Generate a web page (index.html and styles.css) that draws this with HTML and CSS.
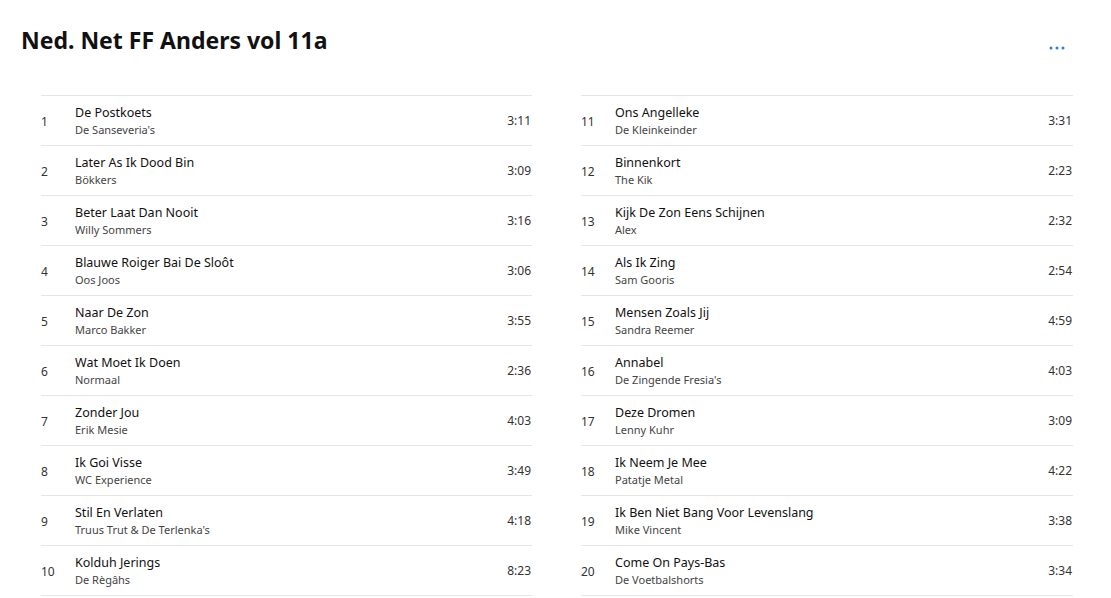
FILE: index.html
```html
<!DOCTYPE html>
<html>
<head>
<meta charset="utf-8">
<link rel="stylesheet" href="styles.css">
</head>
<body>
<div class="page">
  <header class="head">
    <h1 class="title">Ned. Net FF Anders vol 11a</h1>
    <button class="more" aria-label="More"><svg width="16" height="4" viewBox="0 0 16 4"><circle cx="2" cy="2" r="1.5"/><circle cx="8" cy="2" r="1.5"/><circle cx="14" cy="2" r="1.5"/></svg></button>
  </header>
  <div class="cols">
    <ol class="list">
      <li class="row"><span class="num">1</span><div class="info"><span class="song">De Postkoets</span><span class="artist">De Sanseveria's</span></div><span class="dur">3:11</span></li>
      <li class="row"><span class="num">2</span><div class="info"><span class="song">Later As Ik Dood Bin</span><span class="artist">Bökkers</span></div><span class="dur">3:09</span></li>
      <li class="row"><span class="num">3</span><div class="info"><span class="song">Beter Laat Dan Nooit</span><span class="artist">Willy Sommers</span></div><span class="dur">3:16</span></li>
      <li class="row"><span class="num">4</span><div class="info"><span class="song">Blauwe Roiger Bai De Sloôt</span><span class="artist">Oos Joos</span></div><span class="dur">3:06</span></li>
      <li class="row"><span class="num">5</span><div class="info"><span class="song">Naar De Zon</span><span class="artist">Marco Bakker</span></div><span class="dur">3:55</span></li>
      <li class="row"><span class="num">6</span><div class="info"><span class="song">Wat Moet Ik Doen</span><span class="artist">Normaal</span></div><span class="dur">2:36</span></li>
      <li class="row"><span class="num">7</span><div class="info"><span class="song">Zonder Jou</span><span class="artist">Erik Mesie</span></div><span class="dur">4:03</span></li>
      <li class="row"><span class="num">8</span><div class="info"><span class="song">Ik Goi Visse</span><span class="artist">WC Experience</span></div><span class="dur">3:49</span></li>
      <li class="row"><span class="num">9</span><div class="info"><span class="song">Stil En Verlaten</span><span class="artist">Truus Trut &amp; De Terlenka's</span></div><span class="dur">4:18</span></li>
      <li class="row"><span class="num">10</span><div class="info"><span class="song">Kolduh Jerings</span><span class="artist">De Règâhs</span></div><span class="dur">8:23</span></li>
    </ol>
    <ol class="list">
      <li class="row"><span class="num">11</span><div class="info"><span class="song">Ons Angelleke</span><span class="artist">De Kleinkeinder</span></div><span class="dur">3:31</span></li>
      <li class="row"><span class="num">12</span><div class="info"><span class="song">Binnenkort</span><span class="artist">The Kik</span></div><span class="dur">2:23</span></li>
      <li class="row"><span class="num">13</span><div class="info"><span class="song">Kijk De Zon Eens Schijnen</span><span class="artist">Alex</span></div><span class="dur">2:32</span></li>
      <li class="row"><span class="num">14</span><div class="info"><span class="song">Als Ik Zing</span><span class="artist">Sam Gooris</span></div><span class="dur">2:54</span></li>
      <li class="row"><span class="num">15</span><div class="info"><span class="song">Mensen Zoals Jij</span><span class="artist">Sandra Reemer</span></div><span class="dur">4:59</span></li>
      <li class="row"><span class="num">16</span><div class="info"><span class="song">Annabel</span><span class="artist">De Zingende Fresia's</span></div><span class="dur">4:03</span></li>
      <li class="row"><span class="num">17</span><div class="info"><span class="song">Deze Dromen</span><span class="artist">Lenny Kuhr</span></div><span class="dur">3:09</span></li>
      <li class="row"><span class="num">18</span><div class="info"><span class="song">Ik Neem Je Mee</span><span class="artist">Patatje Metal</span></div><span class="dur">4:22</span></li>
      <li class="row"><span class="num">19</span><div class="info"><span class="song">Ik Ben Niet Bang Voor Levenslang</span><span class="artist">Mike Vincent</span></div><span class="dur">3:38</span></li>
      <li class="row"><span class="num">20</span><div class="info"><span class="song">Come On Pays-Bas</span><span class="artist">De Voetbalshorts</span></div><span class="dur">3:34</span></li>
    </ol>
  </div>
</div>
</body>
</html>
```
FILE: styles.css
```css
* { box-sizing: border-box; }
body {
  margin: 0;
  background: #fff;
  font-family: "Noto Sans", "Open Sans", sans-serif;
  color: #1a1a1a;
}
.page {
  padding: 24px 38px 0 21px;
}
.head {
  display: flex;
  align-items: flex-start;
  justify-content: space-between;
  height: 71px;
}
.title {
  margin: 0;
  font-size: 23px;
  font-weight: 700;
  line-height: 32px;
  color: #111;
}
.more {
  border: 0;
  background: none;
  padding: 0;
  margin: 22px 8px 0 0;
  fill: #2f7ae5;
  line-height: 0;
}
.cols {
  display: grid;
  grid-template-columns: 491px 492px;
  column-gap: 49px;
  margin-left: 20px;
}
.list {
  list-style: none;
  margin: 0;
  padding: 0;
  border-bottom: 1px solid #e6e6e6;
}
.row {
  display: flex;
  align-items: center;
  height: 50px;
  border-top: 1px solid #e6e6e6;
}
.num {
  width: 34px;
  font-size: 12px;
  color: #333;
  padding-top: 1px;
}
.info {
  flex: 1;
  display: flex;
  flex-direction: column;
  padding-top: 1px;
}
.song {
  font-size: 12.5px;
  line-height: 18px;
  color: #111;
}
.artist {
  font-size: 11px;
  line-height: 16px;
  color: #444;
}
.dur {
  font-size: 12px;
  color: #333;
  padding-right: 1px;
}
```
